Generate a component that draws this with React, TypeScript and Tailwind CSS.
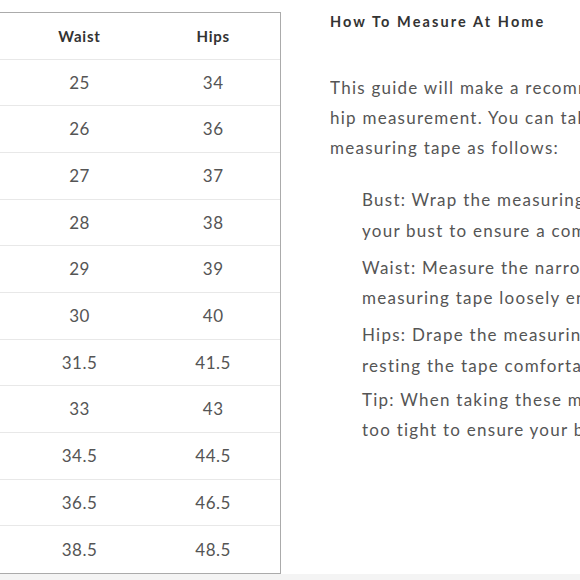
import React from "react";

const rows: [string, string][] = [
  ["25", "34"],
  ["26", "36"],
  ["27", "37"],
  ["28", "38"],
  ["29", "39"],
  ["30", "40"],
  ["31.5", "41.5"],
  ["33", "43"],
  ["34.5", "44.5"],
  ["36.5", "46.5"],
  ["38.5", "48.5"],
];

const tips: [string, string][] = [
  ["Bust: Wrap the measuring tape around the fullest part of", "your bust to ensure a comfortable fit."],
  ["Waist: Measure the narrowest part of your waist, keeping the", "measuring tape loosely enough to breathe."],
  ["Hips: Drape the measuring tape around the widest part,", "resting the tape comfortably around your hips."],
  ["Tip: When taking these measurements, keep the tape not", "too tight to ensure your best fit."],
];

const Row = ({ cells, head }: { cells: string[]; head?: boolean }) => (
  <div className="grid grid-cols-3 h-[46.67px] border-b border-[#e8e8e8] last:border-b-0">
    {/* size column sits off the page */}
    <div />
    {cells.map((c, i) => (
      <div
        key={i}
        className={
          head
            ? "flex items-center justify-center text-[15px] font-bold text-[#333] tracking-[0.8px]"
            : "flex items-center justify-center text-[17px] text-[#555] tracking-[0.5px]"
        }
      >
        {c}
      </div>
    ))}
  </div>
);

export default function App() {
  return (
    <div
      className="w-[580px] h-[580px] overflow-hidden bg-white flex flex-col"
      style={{ fontFamily: "Lato, 'Noto Sans', sans-serif" }}
    >
      <div className="flex flex-1 min-h-0">
        <div className="shrink-0 ml-[-122px] pt-3">
          <div className="w-[403px] border border-[#ababab]">
            <Row head cells={["Waist", "Hips"]} />
            {rows.map((r) => (
              <Row key={r[0]} cells={r} />
            ))}
          </div>
        </div>

        {/* measuring guide */}
        <div className="ml-[49px] flex-1 min-w-0 overflow-hidden whitespace-nowrap text-[#555]">
          <h3 className="mt-[12px] text-[14.5px] leading-[20px] font-bold text-[#333] tracking-[2.1px]">
            How To Measure At Home
          </h3>
          <div className="mt-[41px] text-[17px] leading-[30px] tracking-[1.25px]">
            <div>This guide will make a recommendation based on your bust, waist and</div>
            <div>hip measurement. You can take your measurements using a</div>
            <div>measuring tape as follows:</div>
          </div>
          <div className="mt-[22px] pl-8 flex flex-col gap-[6.5px] text-[17px] leading-[30.5px] tracking-[1.25px]">
            {tips.map((t) => (
              <div key={t[0]} className="last:-mt-[3px]">
                <div>{t[0]}</div>
                <div>{t[1]}</div>
              </div>
            ))}
          </div>
        </div>
      </div>
      <div className="h-[6px] shrink-0 bg-[#f4f4f4]" />
    </div>
  );
}
